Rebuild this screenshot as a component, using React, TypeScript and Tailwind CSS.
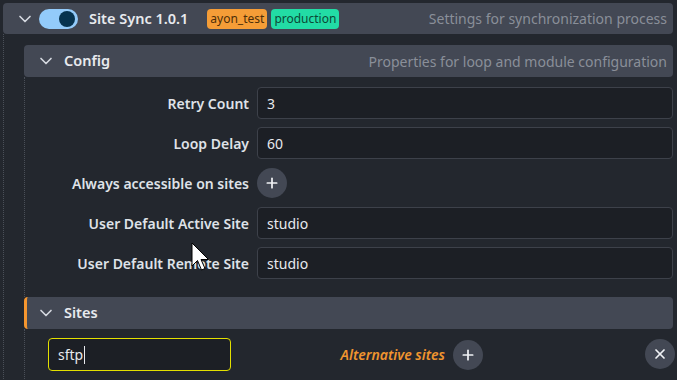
import { ChevronDown, Plus, X } from "lucide-react";

const font = { fontFamily: '"Noto Sans", "Open Sans", sans-serif' };

function Row({ label, children }: { label: string; children: React.ReactNode }) {
  return (
    <div className="flex items-center gap-2 h-8">
      <div className="w-[224px] shrink-0 text-right text-[14px] font-semibold text-[#dfe2e8]">
        {label}
      </div>
      {children}
    </div>
  );
}

function Field({ value }: { value: string }) {
  return (
    <div className="flex-1 h-8 flex items-center px-[9px] rounded-[4px] bg-[#1c1f25] border border-[#3d414a] text-[14px] text-[#e8eaee]">
      {value}
    </div>
  );
}

function RoundButton({ children }: { children: React.ReactNode }) {
  return (
    <div className="w-[30px] h-[30px] rounded-full bg-[#434854] flex items-center justify-center text-[#f0f2f5]">
      {children}
    </div>
  );
}

export default function App() {
  return (
    <div
      className="relative w-[677px] h-[380px] overflow-hidden bg-[#23272e] pt-[3px] pl-[3px] pr-[4px]"
      style={font}
    >
      {/* Module header */}
      <div className="h-[31px] rounded-[4px] bg-[#434854] flex items-center pl-[12px] pr-[6px]">
        <ChevronDown size={20} strokeWidth={2} className="text-[#d5d9e0]" />
        <div className="ml-[4px] w-[39px] h-[20px] rounded-full bg-[#93cbfa] flex items-center justify-end pr-[3px]">
          <div className="w-[16px] h-[16px] rounded-full bg-[#06334f]" />
        </div>
        <span className="ml-[11px] text-[14.5px] font-semibold text-[#e8eaee]">Site Sync 1.0.1</span>
        <span className="ml-[19px] h-[20px] px-[3px] rounded-[4px] bg-[#f59d37] text-[#4d2e08] text-[12px] flex items-center">
          ayon_test
        </span>
        <span className="ml-[4px] h-[20px] px-[3px] rounded-[4px] bg-[#22dca5] text-[#0b4a36] text-[12px] flex items-center">
          production
        </span>
        <span className="ml-auto text-[14px] text-[#8a8f99]">Settings for synchronization process</span>
      </div>

      <div className="border-l border-dotted border-[#4a4f58] pt-[11px] pl-[20px]">
        {/* Config header */}
        <div className="h-[32px] rounded-[4px] bg-[#434854] flex items-center pl-[12px] pr-[6px]">
          <ChevronDown size={20} strokeWidth={2} className="text-[#d5d9e0]" />
          <span className="ml-[8px] text-[14.5px] font-semibold text-[#e8eaee]">Config</span>
          <span className="ml-auto text-[14px] text-[#8a8f99]">Properties for loop and module configuration</span>
        </div>

        <div className="border-l border-dotted border-[#4a4f58] pt-[10px] pb-[18px] flex flex-col gap-2">
          <Row label="Retry Count">
            <Field value="3" />
          </Row>
          <Row label="Loop Delay">
            <Field value="60" />
          </Row>
          <Row label="Always accessible on sites">
            <RoundButton>
              <Plus size={16} strokeWidth={2.6} />
            </RoundButton>
          </Row>
          <Row label="User Default Active Site">
            <Field value="studio" />
          </Row>
          <Row label="User Default Remote Site">
            <Field value="studio" />
          </Row>
        </div>

        {/* Sites header */}
        <div className="h-[32px] rounded-[4px] bg-[#434854] border-l-[3px] border-[#f5962f] flex items-center pl-[9px]">
          <ChevronDown size={20} strokeWidth={2} className="text-[#d5d9e0]" />
          <span className="ml-[8px] text-[14.5px] font-semibold text-[#e8eaee]">Sites</span>
        </div>

        <div className="border-l border-dotted border-[#4a4f58] pt-[9px] pl-[23px] h-[60px] flex items-start">
          <div className="w-[183px] h-[33px] rounded-[4px] border border-[#e3e000] bg-[#1c1f25] flex items-center pl-[9px] text-[14px] text-[#e8eaee]">
            sftp<span className="w-px h-[18px] bg-[#e8eaee] ml-px" />
          </div>
          <span className="ml-auto mt-[6px] mr-[8px] text-[14px] italic font-semibold text-[#f0952f]">
            Alternative sites
          </span>
          <div className="mt-[2px]">
            <RoundButton>
              <Plus size={16} strokeWidth={2.6} />
            </RoundButton>
          </div>
          <div className="ml-[162px] mt-[1px] -mr-[2px]">
            <RoundButton>
              <X size={16} strokeWidth={2.6} />
            </RoundButton>
          </div>
        </div>
      </div>

      {/* mouse cursor */}
      <svg className="absolute left-[191px] top-[242px]" width="20" height="31" viewBox="0 0 20 31">
        <path d="M1 1 L1 24 L6.5 18.5 L10.5 28 L14 26.5 L10 17.5 L17.5 17.5 Z" fill="#ffffff" stroke="#000000" strokeWidth="1" />
      </svg>
    </div>
  );
}
